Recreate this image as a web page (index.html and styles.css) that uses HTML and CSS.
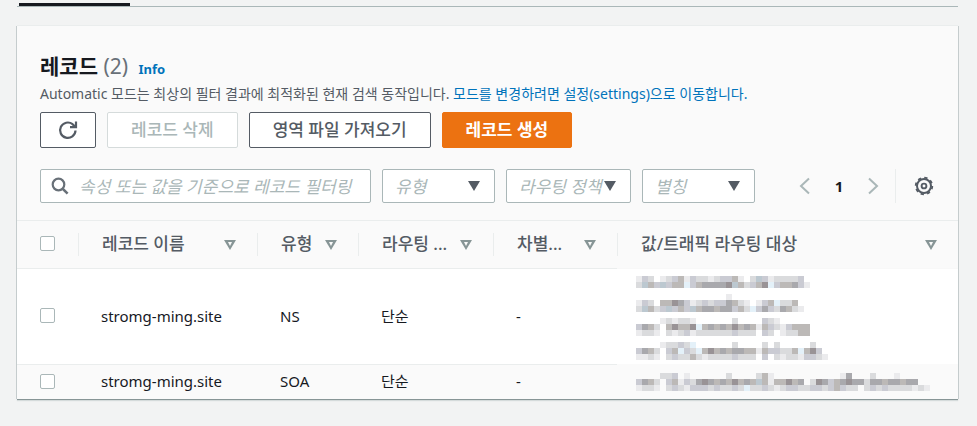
FILE: index.html
```html
<!DOCTYPE html>
<html lang="ko">
<head>
  <meta charset="UTF-8" />
  <meta name="viewport" content="width=device-width, initial-scale=1.0"/>
  <title>레코드</title>
  <link rel="stylesheet" href="styles.css">
</head>
<body>
  <div class="tabs"><div class="tab-active"></div></div>

  <main class="panel">
    <div class="panel-header">
      <h1>레코드 <span class="count">(2)</span> <a class="info" href="#">Info</a></h1>
      <p class="description">Automatic 모드는 최상의 필터 결과에 최적화된 현재 검색 동작입니다. <a href="#">모드를 변경하려면 설정(settings)으로 이동합니다.</a></p>

      <div class="actions">
        <button class="btn btn-icon" aria-label="새로 고침">
          <svg width="20" height="20" viewBox="0 0 20 20"><path d="M17.5 10.5A7.7 7.7 0 1 1 14.6 4.2L17 6.6M18 1.5V7.2H12" fill="none" stroke="#545b64" stroke-width="2.2"/></svg>
        </button>
        <button class="btn" disabled>레코드 삭제</button>
        <button class="btn">영역 파일 가져오기</button>
        <button class="btn btn-primary">레코드 생성</button>
      </div>

      <div class="filters">
        <div class="search">
          <svg width="18" height="18" viewBox="0 0 18 18"><circle cx="7.5" cy="7.5" r="5.8" fill="none" stroke="#687078" stroke-width="2.2"/><path d="M11.8 11.8l4.8 4.8" stroke="#687078" stroke-width="2.6"/></svg>
          <input type="text" aria-label="레코드 필터링" placeholder="속성 또는 값을 기준으로 레코드 필터링">
        </div>
        <div class="select select-type">
          <select aria-label="유형"><option>유형</option></select>
        </div>
        <div class="select select-policy">
          <select aria-label="라우팅 정책"><option>라우팅 정책</option></select>
        </div>
        <div class="select select-alias">
          <select aria-label="별칭"><option>별칭</option></select>
        </div>
        <div class="pagination">
          <button class="page-btn" aria-label="이전">
            <svg width="12" height="18" viewBox="0 0 12 18"><path d="M10 1.5L2 9l8 7.5" fill="none" stroke="#aab7b8" stroke-width="2"/></svg>
          </button>
          <button class="page-btn page-current">1</button>
          <button class="page-btn" aria-label="다음">
            <svg width="12" height="18" viewBox="0 0 12 18"><path d="M2 1.5L10 9l-8 7.5" fill="none" stroke="#aab7b8" stroke-width="2"/></svg>
          </button>
        </div>
        <button class="page-btn settings" aria-label="설정">
          <svg width="20" height="20" viewBox="0 0 20 20" fill="none" stroke="#545b64"><circle cx="10" cy="10" r="7" stroke-width="2"/><circle cx="10" cy="10" r="8.3" stroke-width="1.8" stroke-dasharray="3.26 3.26"/><circle cx="10" cy="10" r="2.4" stroke-width="1.9"/></svg>
        </button>
      </div>
    </div>

    <table class="records">
      <colgroup>
        <col class="col-check"><col class="col-name"><col class="col-type"><col class="col-policy"><col class="col-diff"><col>
      </colgroup>
      <thead>
        <tr>
          <th><input type="checkbox" aria-label="모두 선택"></th>
          <th><div class="th"><span>레코드 이름</span><i class="sort"></i></div></th>
          <th><div class="th"><span>유형</span><i class="sort"></i></div></th>
          <th><div class="th"><span>라우팅 ...</span><i class="sort"></i></div></th>
          <th><div class="th"><span>차별...</span><i class="sort"></i></div></th>
          <th><div class="th"><span>값/트래픽 라우팅 대상</span><i class="sort"></i></div></th>
        </tr>
      </thead>
      <tbody>
        <tr>
          <td><input type="checkbox" aria-label="stromg-ming.site NS"></td>
          <td>stromg-ming.site</td>
          <td>NS</td>
          <td>단순</td>
          <td>-</td>
          <td class="value"><svg class="mosaic" id="valueNs"></svg></td>
        </tr>
        <tr>
          <td><input type="checkbox" aria-label="stromg-ming.site SOA"></td>
          <td>stromg-ming.site</td>
          <td>SOA</td>
          <td>단순</td>
          <td>-</td>
          <td class="value"><svg class="mosaic" id="valueSoa"></svg></td>
        </tr>
      </tbody>
    </table>
  </main>

  <script src="script.js"></script>
</body>
</html>
```
FILE: styles.css
```css
* {
  box-sizing: border-box;
}

body {
  margin: 0;
  padding: 0 19px 24px 17px;
  background: #f2f3f3;
  color: #16191f;
  font-family: "Noto Sans", "Noto Sans CJK KR", sans-serif;
  font-size: 15px;
}

a {
  color: #0073bb;
  text-decoration: none;
}

button,
input,
select {
  font-family: inherit;
  font-size: 17px;
}

.tabs {
  height: 7px;
  padding: 3px 2px 0;
  border-bottom: 1px solid #aab7b8;
}

.tab-active {
  width: 111px;
  height: 3px;
  background: #16191f;
}

.panel {
  margin-top: 19px;
  background: #fff;
  box-shadow: 0 1px 0 #879596, 1px 0 0 #c5cccd, -1px 0 0 #c5cccd, 0 -1px 0 #eaeded, 0 2px 1px #d5dbdb;
}

.panel-header {
  padding: 26px 23px 17px;
  background: #fafafa;
  border-bottom: 1px solid #eaeded;
}

h1 {
  margin: 0;
  font-size: 21px;
  line-height: 28px;
  font-weight: 700;
}

.count {
  color: #687078;
  font-weight: 400;
}

.info {
  margin-left: 5px;
  font-size: 13px;
}

.description {
  margin: 0;
  color: #545b64;
  font-size: 14px;
  line-height: 22px;
  white-space: nowrap;
}

.actions {
  display: flex;
  gap: 11px;
  margin-top: 7px;
}

.btn {
  height: 36px;
  padding: 0 23px;
  background: #fff;
  border: 1px solid #545b64;
  border-radius: 2px;
  color: #545b64;
  font-weight: 500;
  line-height: 24px;
  white-space: nowrap;
}

.btn:disabled {
  border-color: #d5dbdb;
  color: #aab7b8;
}

.btn-icon {
  display: flex;
  align-items: center;
  justify-content: center;
  width: 56px;
  padding: 0;
}

.btn-primary {
  background: #ec7211;
  border-color: #ec7211;
  color: #fff;
  font-weight: 700;
}

.filters {
  display: flex;
  gap: 11px;
  margin-top: 21px;
  height: 34px;
}

.search {
  display: flex;
  flex: 1;
  align-items: center;
  min-width: 0;
  padding-left: 10px;
  background: #fff;
  border: 1px solid #aab7b8;
  border-radius: 2px;
}

.search input {
  flex: 1;
  min-width: 0;
  padding: 0 0 0 10px;
  border: 0;
  outline: 0;
  background: none;
}

.search input::placeholder {
  color: #aab7b8;
  font-style: italic;
}

.select {
  position: relative;
}

.select::after {
  content: "";
  position: absolute;
  top: 12px;
  right: 15px;
  border: 6px solid transparent;
  border-top: 10px solid #545b64;
  border-bottom: 0;
  pointer-events: none;
}

.select select {
  appearance: none;
  width: 100%;
  height: 34px;
  padding: 0 12px;
  background: #fff;
  border: 1px solid #aab7b8;
  border-radius: 2px;
  color: #aab7b8;
  font-style: italic;
}

.select-type {
  width: 113px;
}

.select-policy {
  width: 125px;
}

.select-alias {
  width: 113px;
}

.pagination {
  display: flex;
  align-items: center;
  gap: 22px;
  margin-left: 33px;
  padding-right: 16px;
  border-right: 1px solid #eaeded;
}

.page-btn {
  display: flex;
  align-items: center;
  justify-content: center;
  min-width: 12px;
  padding: 0;
  border: 0;
  background: none;
}

.page-current {
  color: #16191f;
  font-size: 15px;
  font-weight: 700;
}

.settings {
  margin: 0 1px 0 7px;
}

.records {
  width: 100%;
  border-collapse: separate;
  border-spacing: 0;
  table-layout: fixed;
}

.col-check { width: 61px; }
.col-name { width: 179px; }
.col-type { width: 101px; }
.col-policy { width: 135px; }
.col-diff { width: 124px; }

.records th {
  height: 48px;
  padding: 0;
  background: #fafafa;
  border-bottom: 1px solid #eaeded;
  color: #545b64;
  font-size: 17px;
  font-weight: 500;
  text-align: left;
}

.records th:last-child {
  border-color: #f8f8f8;
}

.th {
  display: flex;
  align-items: center;
  justify-content: space-between;
  height: 23px;
  padding: 0 21px 0 23px;
  border-left: 1px solid #eaeded;
  white-space: nowrap;
}

.th span {
  padding-bottom: 4px;
}

.sort {
  position: relative;
  border: 6px solid transparent;
  border-top: 10px solid #879596;
  border-bottom: 0;
}

/* light centre of the sort arrow */
.sort::after {
  content: "";
  position: absolute;
  top: -8px;
  left: -2px;
  border: 2px solid transparent;
  border-top: 4px solid #fafafa;
  border-bottom: 0;
}

.records td {
  height: 34px;
  padding: 0 0 2px 23px;
  line-height: 24px;
}

.records th:first-child,
.records td:first-child {
  padding: 0 0 2px 23px;
}

.records tbody tr:first-child td {
  height: 96px;
  border-bottom: 1px solid #eaeded;
}

.records tbody tr:last-child td {
  background: #fafafa;
}

.records .value {
  padding: 1px 0 1px 19px;
}

.records tbody tr:first-child .value {
  border-color: #fafafa;
  vertical-align: top;
}

.records input {
  appearance: none;
  display: block;
  width: 15px;
  height: 15px;
  margin: 0;
  background: #fff;
  border: 1px solid #aab7b8;
  border-radius: 2px;
}

.mosaic {
  display: block;
}
```
FILE: script.js
```js
const CELL = 6;

const shades = {
  a: "#ebebed",
  b: "#dadbdd",
  c: "#cacbd3",
  d: "#bcb9b7",
  e: "#a9a9ad",
  f: "#999396",
  g: "#e4f1f9",
  h: "#bcc8d0"
};

const nsRows = [
  "",
  "acb.abcdacbbabccda.bhcabbbbc",
  "bhdchcddgcdeeeefhdbcdfgcddeca",
  "",
  "...............a",
  "acb.ddfecabcbccedba.acdgbbd",
  "bhdbchcdchdeedeecdbgcecbedba",
  "",
  "....ababba......b....cba",
  "cedb.dfddfgdededfdedadcbacddd",
  "abba.babcabbbbbbcbbb.cb.abbdd",
  "",
  "....abbcbg......b....b.b.....b",
  "cedb.cdgcbgdfdedeeddadccbbdgdfc",
  "aaba.bcbbdbabbbbcbbb.c.babbaccba"
];

const soaRows = [
  "....bbc.a......b....bda...........ae...b...a",
  "cedb.cdacbefededfdedhdaddfde.bfecdefeebeedeedee",
  "abba.bcbacccbcbbcbgbbcbabccbbccbcdcbb.bcbcbbbbaba"
];

function drawMosaic(id, rows) {
  const svg = document.getElementById(id);
  const cols = Math.max(...rows.map(row => row.length));
  svg.setAttribute("width", cols * CELL);
  svg.setAttribute("height", rows.length * CELL);

  rows.forEach((row, y) => {
    [...row].forEach((key, x) => {
      if (!shades[key]) return;
      const rect = document.createElementNS("http://www.w3.org/2000/svg", "rect");
      rect.setAttribute("x", x * CELL);
      rect.setAttribute("y", y * CELL);
      rect.setAttribute("width", CELL);
      rect.setAttribute("height", CELL);
      rect.setAttribute("fill", shades[key]);
      svg.appendChild(rect);
    });
  });
}

drawMosaic("valueNs", nsRows);
drawMosaic("valueSoa", soaRows);
```
